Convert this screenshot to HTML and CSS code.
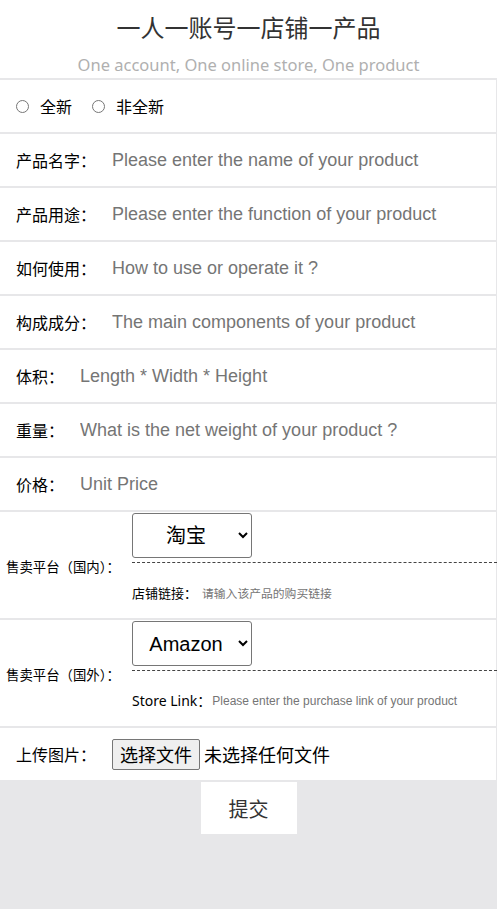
FILE: index.html
```html
<!DOCTYPE html>
<html lang="zh-CN">
<head>
<meta charset="utf-8">
<title>一人一账号一店铺一产品</title>
<link rel="stylesheet" href="styles.css">
</head>
<body>
<header class="header">
  <h1 class="title">一人一账号一店铺一产品</h1>
  <p class="subtitle">One account, One online store, One product</p>
</header>
<form class="form">
  <div class="row row-radio">
    <label class="radio-item"><input type="radio" name="cond" class="radio"><span>全新</span></label>
    <label class="radio-item"><input type="radio" name="cond" class="radio"><span>非全新</span></label>
  </div>
  <div class="row">
    <span class="lbl">产品名字：</span><input class="field" placeholder="Please enter the name of your product">
  </div>
  <div class="row">
    <span class="lbl">产品用途：</span><input class="field" placeholder="Please enter the function of your product">
  </div>
  <div class="row">
    <span class="lbl">如何使用：</span><input class="field" placeholder="How to use or operate it ?">
  </div>
  <div class="row">
    <span class="lbl">构成成分：</span><input class="field" placeholder="The main components of your product">
  </div>
  <div class="row">
    <span class="lbl">体积：</span><input class="field" placeholder="Length * Width * Height">
  </div>
  <div class="row">
    <span class="lbl">重量：</span><input class="field" placeholder="What is the net weight of your product ?">
  </div>
  <div class="row">
    <span class="lbl">价格：</span><input class="field" placeholder="Unit Price">
  </div>
  <div class="row row-plat">
    <span class="plat-lbl">售卖平台（国内）：</span>
    <div class="plat-right">
      <div class="sel-wrap">
        <select class="sel"><option>淘宝</option><option>京东</option></select>
      </div>
      <div class="link-row">
        <span class="link-lbl">店铺链接：</span><input class="link-field cn" placeholder="请输入该产品的购买链接">
      </div>
    </div>
  </div>
  <div class="row row-plat">
    <span class="plat-lbl">售卖平台（国外）：</span>
    <div class="plat-right">
      <div class="sel-wrap">
        <select class="sel"><option>Amazon</option><option>eBay</option></select>
      </div>
      <div class="link-row">
        <span class="link-lbl en">Store Link：</span><input class="link-field" placeholder="Please enter the purchase link of your product">
      </div>
    </div>
  </div>
  <div class="row">
    <span class="lbl">上传图片：</span>
    <label class="file">
      <input type="file" class="file-input">
      <span class="file-btn">选择文件</span><span class="file-text">未选择任何文件</span>
    </label>
  </div>
  <button type="button" class="submit">提交</button>
</form>
</body>
</html>
```
FILE: styles.css
```css
html, body {
  margin: 0;
  padding: 0;
}
body {
  background: #e7e7e9;
  font-family: "Noto Sans CJK SC", "Noto Sans", sans-serif;
  color: #000;
  height: 909px;
}
.header {
  background: #fff;
  height: 78px;
  text-align: center;
  overflow: hidden;
}
.title {
  margin: 0;
  padding-top: 11px;
  font-size: 24px;
  font-weight: normal;
  line-height: 32px;
  color: #333;
}
.subtitle {
  margin: 0;
  padding-top: 12px;
  font-family: "Noto Sans", "Noto Sans CJK SC", sans-serif;
  font-size: 16.5px;
  line-height: 20px;
  color: #b0b0b0;
}
.form {
  margin: 0;
}
.row {
  width: 496px;
  height: 52px;
  box-sizing: border-box;
  margin-top: 2px;
  background: #fff;
  display: flex;
  align-items: center;
  padding-left: 16px;
}
.row-radio {
  padding-left: 11px;
}
.radio-item {
  display: flex;
  align-items: center;
  font-size: 16px;
  line-height: 20px;
  margin-right: 15px;
}
.radio {
  margin: 0 11px 0 5px;
  width: 13px;
  height: 13px;
}
.lbl {
  font-size: 16px;
  line-height: 20px;
  margin-right: 16px;
  white-space: nowrap;
}
.field {
  flex: 1;
  min-width: 0;
  border: none;
  outline: none;
  padding: 0;
  margin: 0;
  font-family: "Liberation Sans", Arial, sans-serif;
  font-size: 18px;
  line-height: 24px;
  color: #333;
  background: transparent;
}
.field::placeholder, .link-field::placeholder {
  color: #757575;
}
.row-plat {
  height: 106px;
  padding-left: 0;
  align-items: stretch;
}
.plat-lbl {
  width: 132px;
  box-sizing: border-box;
  padding-left: 6px;
  flex: none;
  font-size: 13.4px;
  line-height: 18px;
  text-align: left;
  align-self: center;
  padding-top: 2px;
  white-space: nowrap;
}
.plat-right {
  flex: 1;
  display: flex;
  flex-direction: column;
}
.sel-wrap {
  padding-top: 1px;
  padding-bottom: 4px;
  border-bottom: 1px dashed #444;
  margin-right: -1px;
}
.sel {
  display: block;
  width: 120px;
  height: 45px;
  margin: 0;
  font-family: "Liberation Sans", "Noto Sans CJK SC", sans-serif;
  font-size: 20px;
  text-align: center;
  text-align-last: center;
  background: #fff;
  color: #000;
  border: 1px solid #767676;
  border-radius: 3px;
}
.link-row {
  flex: 1;
  display: flex;
  align-items: center;
  padding-top: 4px;
}
.link-lbl {
  font-size: 13px;
  line-height: 18px;
  white-space: nowrap;
  margin-right: 5px;
}
.link-lbl.en {
  font-family: "Noto Sans", "Noto Sans CJK SC", sans-serif;
  font-size: 14px;
  margin-right: 1px;
}
.link-field {
  flex: 1;
  min-width: 0;
  border: none;
  outline: none;
  padding: 0;
  margin: 0;
  font-family: "Liberation Sans", Arial, sans-serif;
  font-size: 12px;
  line-height: 16px;
  background: transparent;
}
.link-field.cn {
  font-family: "Noto Sans CJK SC", sans-serif;
  font-size: 11.8px;
}
.file {
  display: flex;
  align-items: center;
  font-size: 18px;
}
.file-input {
  display: none;
}
.file-btn {
  display: inline-block;
  box-sizing: border-box;
  height: 31px;
  padding: 0 7px;
  line-height: 29px;
  background: #efefef;
  border: 1px solid #767676;
  border-radius: 2px;
  margin-right: 4px;
}
.file-text {
  line-height: 24px;
}
.submit {
  display: block;
  width: 96px;
  height: 52px;
  margin: 2px auto 0;
  padding: 0;
  border: none;
  background: #fff;
  font-family: "Noto Sans CJK SC", sans-serif;
  font-size: 20px;
  color: #333;
}
```
